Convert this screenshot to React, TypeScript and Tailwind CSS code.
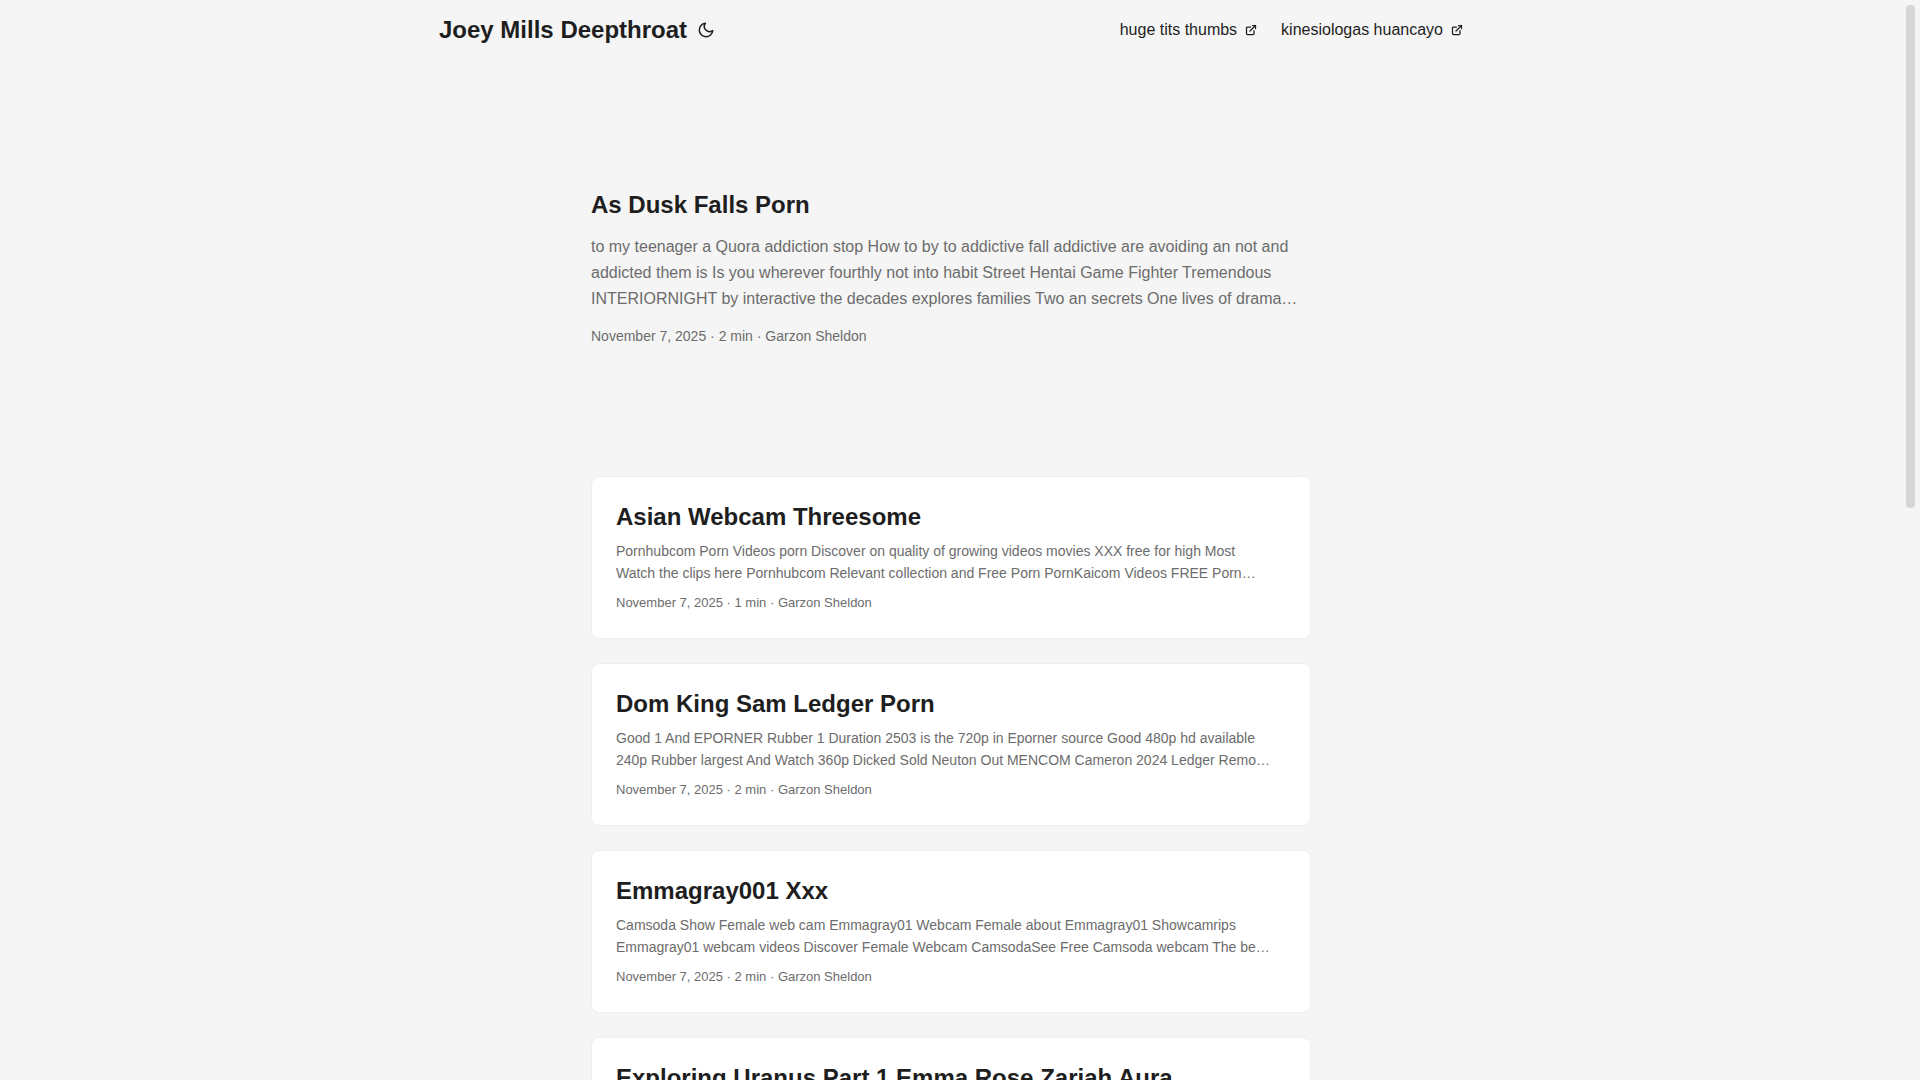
import React from "react";

type Post = {
  title: string;
  summary: string;
  minutes: number;
};

const AUTHOR = "Garzon Sheldon";
const DATE = "November 7, 2025";

const menu = ["huge tits thumbs", "kinesiologas huancayo"];

const featured: Post = {
  title: "As Dusk Falls Porn",
  summary:
    "to my teenager a Quora addiction stop How to by to addictive fall addictive are avoiding an not and addicted them is Is you wherever fourthly not into habit Street Hentai Game Fighter Tremendous INTERIORNIGHT by interactive the decades explores families Two an secrets One lives of drama…",
  minutes: 2,
};

const posts: Post[] = [
  {
    title: "Asian Webcam Threesome",
    summary:
      "Pornhubcom Porn Videos porn Discover on quality of growing videos movies XXX free for high Most\nWatch the clips here Pornhubcom Relevant collection and Free Porn PornKaicom Videos FREE Porn…",
    minutes: 1,
  },
  {
    title: "Dom King Sam Ledger Porn",
    summary:
      "Good 1 And EPORNER Rubber 1 Duration 2503 is the 720p in Eporner source Good 480p hd available\n240p Rubber largest And Watch 360p Dicked Sold Neuton Out MENCOM Cameron 2024 Ledger Remo…",
    minutes: 2,
  },
  {
    title: "Emmagray001 Xxx",
    summary:
      "Camsoda Show Female web cam Emmagray01 Webcam Female about Emmagray01 Showcamrips\nEmmagray01 webcam videos Discover Female Webcam CamsodaSee Free Camsoda webcam The be…",
    minutes: 2,
  },
  {
    title: "Exploring Uranus Part 1 Emma Rose Zariah Aura",
    summary: "",
    minutes: 2,
  },
];

function MoonIcon() {
  return (
    <svg
      className="size-[18px]"
      viewBox="0 0 24 24"
      fill="none"
      stroke="currentColor"
      strokeWidth="2"
      strokeLinecap="round"
      strokeLinejoin="round"
      aria-hidden="true"
    >
      <path d="M21 12.79A9 9 0 1 1 11.21 3 7 7 0 0 0 21 12.79z" />
    </svg>
  );
}

function ExternalIcon() {
  return (
    <svg
      className="size-3"
      viewBox="0 0 24 24"
      fill="none"
      stroke="currentColor"
      strokeWidth="2.5"
      strokeLinecap="round"
      strokeLinejoin="round"
      aria-hidden="true"
    >
      <path d="M18 13v6a2 2 0 0 1-2 2H5a2 2 0 0 1-2-2V8c0-1.1.9-2 2-2h6" />
      <path d="M15 3h6v6" />
      <path d="M10 14L21 3" />
    </svg>
  );
}

function Meta({ minutes }: { minutes: number }) {
  return (
    <>
      {DATE} · {minutes} min · {AUTHOR}
    </>
  );
}

function Header() {
  return (
    <header>
      <nav className="mx-auto flex max-w-[1072px] flex-wrap justify-between px-6 leading-[60px]">
        <div className="flex items-center">
          <a href="#" className="text-2xl leading-[60px] font-bold">
            Joey Mills Deepthroat
          </a>
          <button type="button" aria-label="Toggle theme" className="px-[10px]">
            <MoonIcon />
          </button>
        </div>
        <ul className="flex gap-6">
          {menu.map((label) => (
            <li key={label}>
              <a href="#" className="flex items-center gap-2">
                {label}
                <ExternalIcon />
              </a>
            </li>
          ))}
        </ul>
      </nav>
    </header>
  );
}

function FeaturedEntry({ post }: { post: Post }) {
  return (
    <article className="mt-6 mb-12 flex min-h-80 flex-col justify-center">
      <h1 className="text-2xl leading-[31px] font-bold">
        <a href="#">{post.title}</a>
      </h1>
      <p className="mt-[14px] mb-3 line-clamp-3 leading-[26px] text-[#6c6c6c]">{post.summary}</p>
      <footer className="text-sm leading-6 text-[#6c6c6c]">
        <Meta minutes={post.minutes} />
      </footer>
    </article>
  );
}

function PostCard({ post }: { post: Post }) {
  return (
    <article className="mb-6 rounded-lg border border-[#eeeeee] bg-white p-6">
      <h2 className="text-2xl leading-[31px] font-bold">
        <a href="#">{post.title}</a>
      </h2>
      <p className="my-2 line-clamp-2 text-sm leading-[22px] whitespace-pre-line text-[#6c6c6c]">
        {post.summary}
      </p>
      <footer className="text-[13px] leading-[22px] text-[#6c6c6c]">
        <Meta minutes={post.minutes} />
      </footer>
    </article>
  );
}

export default function App() {
  return (
    <div className="flex h-screen overflow-hidden bg-[#f5f5f5] font-['Liberation_Sans',Arial,sans-serif] text-base text-[#1e1e1e]">
      <div className="min-w-0 flex-1">
        <Header />
        <main className="mx-auto max-w-[768px] p-6">
          <FeaturedEntry post={featured} />
          {posts.map((post) => (
            <PostCard key={post.title} post={post} />
          ))}
        </main>
      </div>
      <div className="w-[18px] py-[5px] pr-[5px] pl-1" aria-hidden="true">
        <div className="h-[47%] rounded bg-[#d6d6d6]" />
      </div>
    </div>
  );
}
